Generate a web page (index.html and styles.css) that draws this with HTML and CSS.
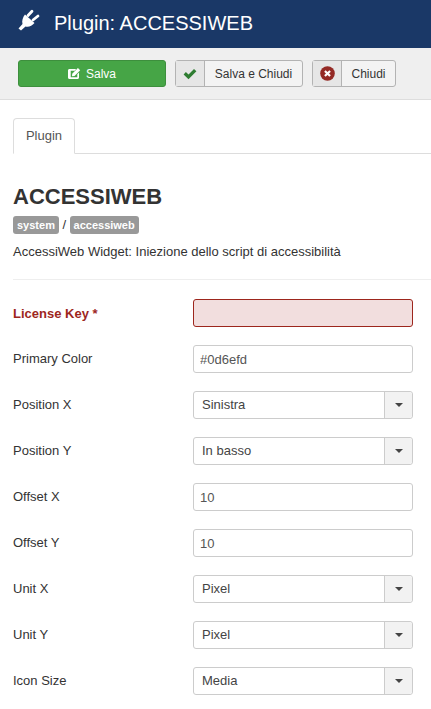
FILE: index.html
```html
<!DOCTYPE html>
<html lang="it">

<head>
  <meta charset="UTF-8">
  <meta name="viewport" content="width=device-width, initial-scale=1.0">
  <title>Plugin: ACCESSIWEB</title>
  <link rel="stylesheet" href="styles.css">
</head>

<body>
  <header class="title-bar">
    <svg class="plug" viewBox="0 0 22 22" aria-hidden="true">
      <path class="plug-body" d="M7 5.5 L16.5 14 C14 17 10.5 18.5 7.5 17.5 L3 21.5 L0.5 19.5 L4.5 15 C3.5 11.5 5 8 7 5.5 Z" />
      <path class="plug-prongs" d="M10 6.5 L14 2.2 M15 11 L20 7" />
    </svg>
    <h1>Plugin: ACCESSIWEB</h1>
  </header>

  <div class="toolbar">
    <button class="btn btn-save">
      <svg class="icon" viewBox="0 0 13 13" aria-hidden="true">
        <path d="M1.5 2 H8.2 L6.6 3.7 H2.7 V10.3 H9.3 V7.2 L11 5.5 V10.5 C11 11.4 10.4 12 9.5 12 H1.5 C.6 12 0 11.4 0 10.5 V3.5 C0 2.6 .6 2 1.5 2 Z" />
        <path d="M4.2 6.8 L9.9 1 L12.2 3.3 L6.5 9 L4 9.3 Z" />
      </svg>
      Salva
    </button>
    <button class="btn btn-split btn-save-close">
      <span class="btn-icon">
        <svg class="icon" viewBox="0 0 14 12" aria-hidden="true">
          <path class="check" d="M.6 6.4 L2.9 4.1 L5.5 6.6 L11 1 L13.4 3.3 L5.5 11.2 Z" />
        </svg>
      </span>
      <span class="btn-label">Salva e Chiudi</span>
    </button>
    <button class="btn btn-split btn-close">
      <span class="btn-icon">
        <svg class="icon icon-close" viewBox="0 0 14 14" aria-hidden="true">
          <circle class="close-disc" cx="7" cy="7" r="6.8" />
          <path class="close-x" d="M4.6 4.6 L9.4 9.4 M9.4 4.6 L4.6 9.4" />
        </svg>
      </span>
      <span class="btn-label">Chiudi</span>
    </button>
  </div>

  <main class="content">
    <nav class="tabs">
      <a class="tab" href="#">Plugin</a>
    </nav>

    <h2>ACCESSIWEB</h2>
    <p class="path"><span class="badge">system</span> / <span class="badge">accessiweb</span></p>
    <p class="desc">AccessiWeb Widget: Iniezione dello script di accessibilità</p>
    <hr>

    <form class="fields">
      <div class="row row-invalid">
        <label for="key">License Key *</label>
        <input id="key" type="text">
      </div>
      <div class="row">
        <label for="color">Primary Color</label>
        <input id="color" type="text" value="#0d6efd">
      </div>
      <div class="row">
        <label>Position X</label>
        <div class="select"><span>Sinistra</span><b class="caret"></b></div>
      </div>
      <div class="row">
        <label>Position Y</label>
        <div class="select"><span>In basso</span><b class="caret"></b></div>
      </div>
      <div class="row">
        <label for="ox">Offset X</label>
        <input id="ox" type="text" value="10">
      </div>
      <div class="row">
        <label for="oy">Offset Y</label>
        <input id="oy" type="text" value="10">
      </div>
      <div class="row">
        <label>Unit X</label>
        <div class="select"><span>Pixel</span><b class="caret"></b></div>
      </div>
      <div class="row">
        <label>Unit Y</label>
        <div class="select"><span>Pixel</span><b class="caret"></b></div>
      </div>
      <div class="row">
        <label>Icon Size</label>
        <div class="select"><span>Media</span><b class="caret"></b></div>
      </div>
    </form>
  </main>
</body>

</html>
```

FILE: styles.css
```css
body {
  margin: 0;
  font-family: "Liberation Sans", Arial, sans-serif;
  font-size: 13px;
  line-height: 18px;
  color: #333;
  background: #fff;
}

.title-bar {
  display: flex;
  align-items: center;
  gap: 14px;
  box-sizing: border-box;
  height: 48px;
  padding-left: 18px;
  padding-bottom: 2px;
  background: #1a3867;
}

.plug {
  width: 22px;
  height: 22px;
  margin-top: -6px;
}

.plug-body {
  fill: #fff;
}

.plug-prongs {
  fill: none;
  stroke: #fff;
  stroke-width: 2.8;
  stroke-linecap: round;
}

h1 {
  margin: 0;
  font-size: 20px;
  font-weight: 400;
  color: #fff;
}

.toolbar {
  display: flex;
  gap: 9px;
  box-sizing: border-box;
  height: 52px;
  padding: 12px 18px 0;
  background: #efefef;
  border-bottom: 1px solid #ddd;
}

.btn {
  display: flex;
  align-items: center;
  box-sizing: border-box;
  height: 27px;
  padding: 0;
  font: inherit;
  font-size: 12px;
  color: #333;
  background: #f3f3f3;
  border: 1px solid #b3b3b3;
  border-radius: 3px;
}

.btn-save {
  justify-content: center;
  gap: 5px;
  width: 148px;
  color: #fff;
  background: #46a546;
  border-color: #3d8f3d;
}

.btn-save-close {
  width: 128px;
}

.btn-close {
  width: 84px;
}

.btn-save .icon {
  width: 13px;
  height: 13px;
  fill: #fff;
}

.btn-icon {
  display: flex;
  align-items: center;
  justify-content: center;
  width: 28px;
  height: 100%;
  background: #e6e6e6;
  border-right: 1px solid #b3b3b3;
}

.btn-label {
  flex: 1;
  text-align: center;
}

.check {
  fill: #2f7d32;
}

.btn-icon .icon {
  width: 14px;
  height: 12px;
}

.btn-icon .icon-close {
  width: 15px;
  height: 15px;
}

.close-disc {
  fill: #942a25;
}

.close-x {
  fill: none;
  stroke: #fff;
  stroke-width: 2;
}

.content {
  padding: 18px 18px 0 13px;
}

.tabs {
  display: flex;
  margin-right: -18px;
  border-bottom: 1px solid #ddd;
}

.tab {
  box-sizing: border-box;
  width: 62px;
  height: 36px;
  margin-bottom: -1px;
  line-height: 34px;
  text-align: center;
  color: #555;
  text-decoration: none;
  background: #fff;
  border: 1px solid #ddd;
  border-bottom-color: #fff;
  border-radius: 4px 4px 0 0;
}

h2 {
  margin: 30px 0 0;
  font-size: 22px;
  line-height: 26px;
  color: #333;
}

.path {
  display: flex;
  align-items: center;
  gap: 3.5px;
  margin: 6px 0 0;
  height: 18px;
}

.badge {
  padding: 0 4px;
  font-size: 11px;
  font-weight: 700;
  line-height: 18px;
  color: #fff;
  background: #999;
  border-radius: 3px;
}

.desc {
  margin: 9px 0 0;
}

hr {
  height: 1px;
  margin: 18px -18px 0 0;
  border: 0;
  background: #eee;
}

.fields {
  display: flex;
  flex-direction: column;
  gap: 18px;
  margin-top: 19px;
}

.row {
  display: flex;
  align-items: center;
  height: 28px;
}

.row label {
  width: 180px;
  flex: none;
}

.row input,
.select {
  box-sizing: border-box;
  width: 220px;
  height: 28px;
  font: inherit;
  color: #555;
  background: #fff;
  border: 1px solid #ccc;
  border-radius: 3px;
}

.row input {
  padding: 0 6px;
}

.row-invalid label {
  padding-top: 2px;
  font-weight: 700;
  color: #9d261d;
}

.row-invalid input {
  background: #f2dede;
  border-color: #9d261d;
}

.select {
  display: flex;
  align-items: center;
  justify-content: space-between;
  padding-left: 8px;
  color: #444;
}

.caret {
  display: flex;
  align-items: center;
  justify-content: center;
  box-sizing: border-box;
  width: 28px;
  height: 100%;
  background: #f2f2f2;
  border-left: 1px solid #ccc;
  border-radius: 0 3px 3px 0;
}

.caret::before {
  content: "";
  border: 4px solid transparent;
  border-top-color: #444;
  border-bottom: 0;
}
```
